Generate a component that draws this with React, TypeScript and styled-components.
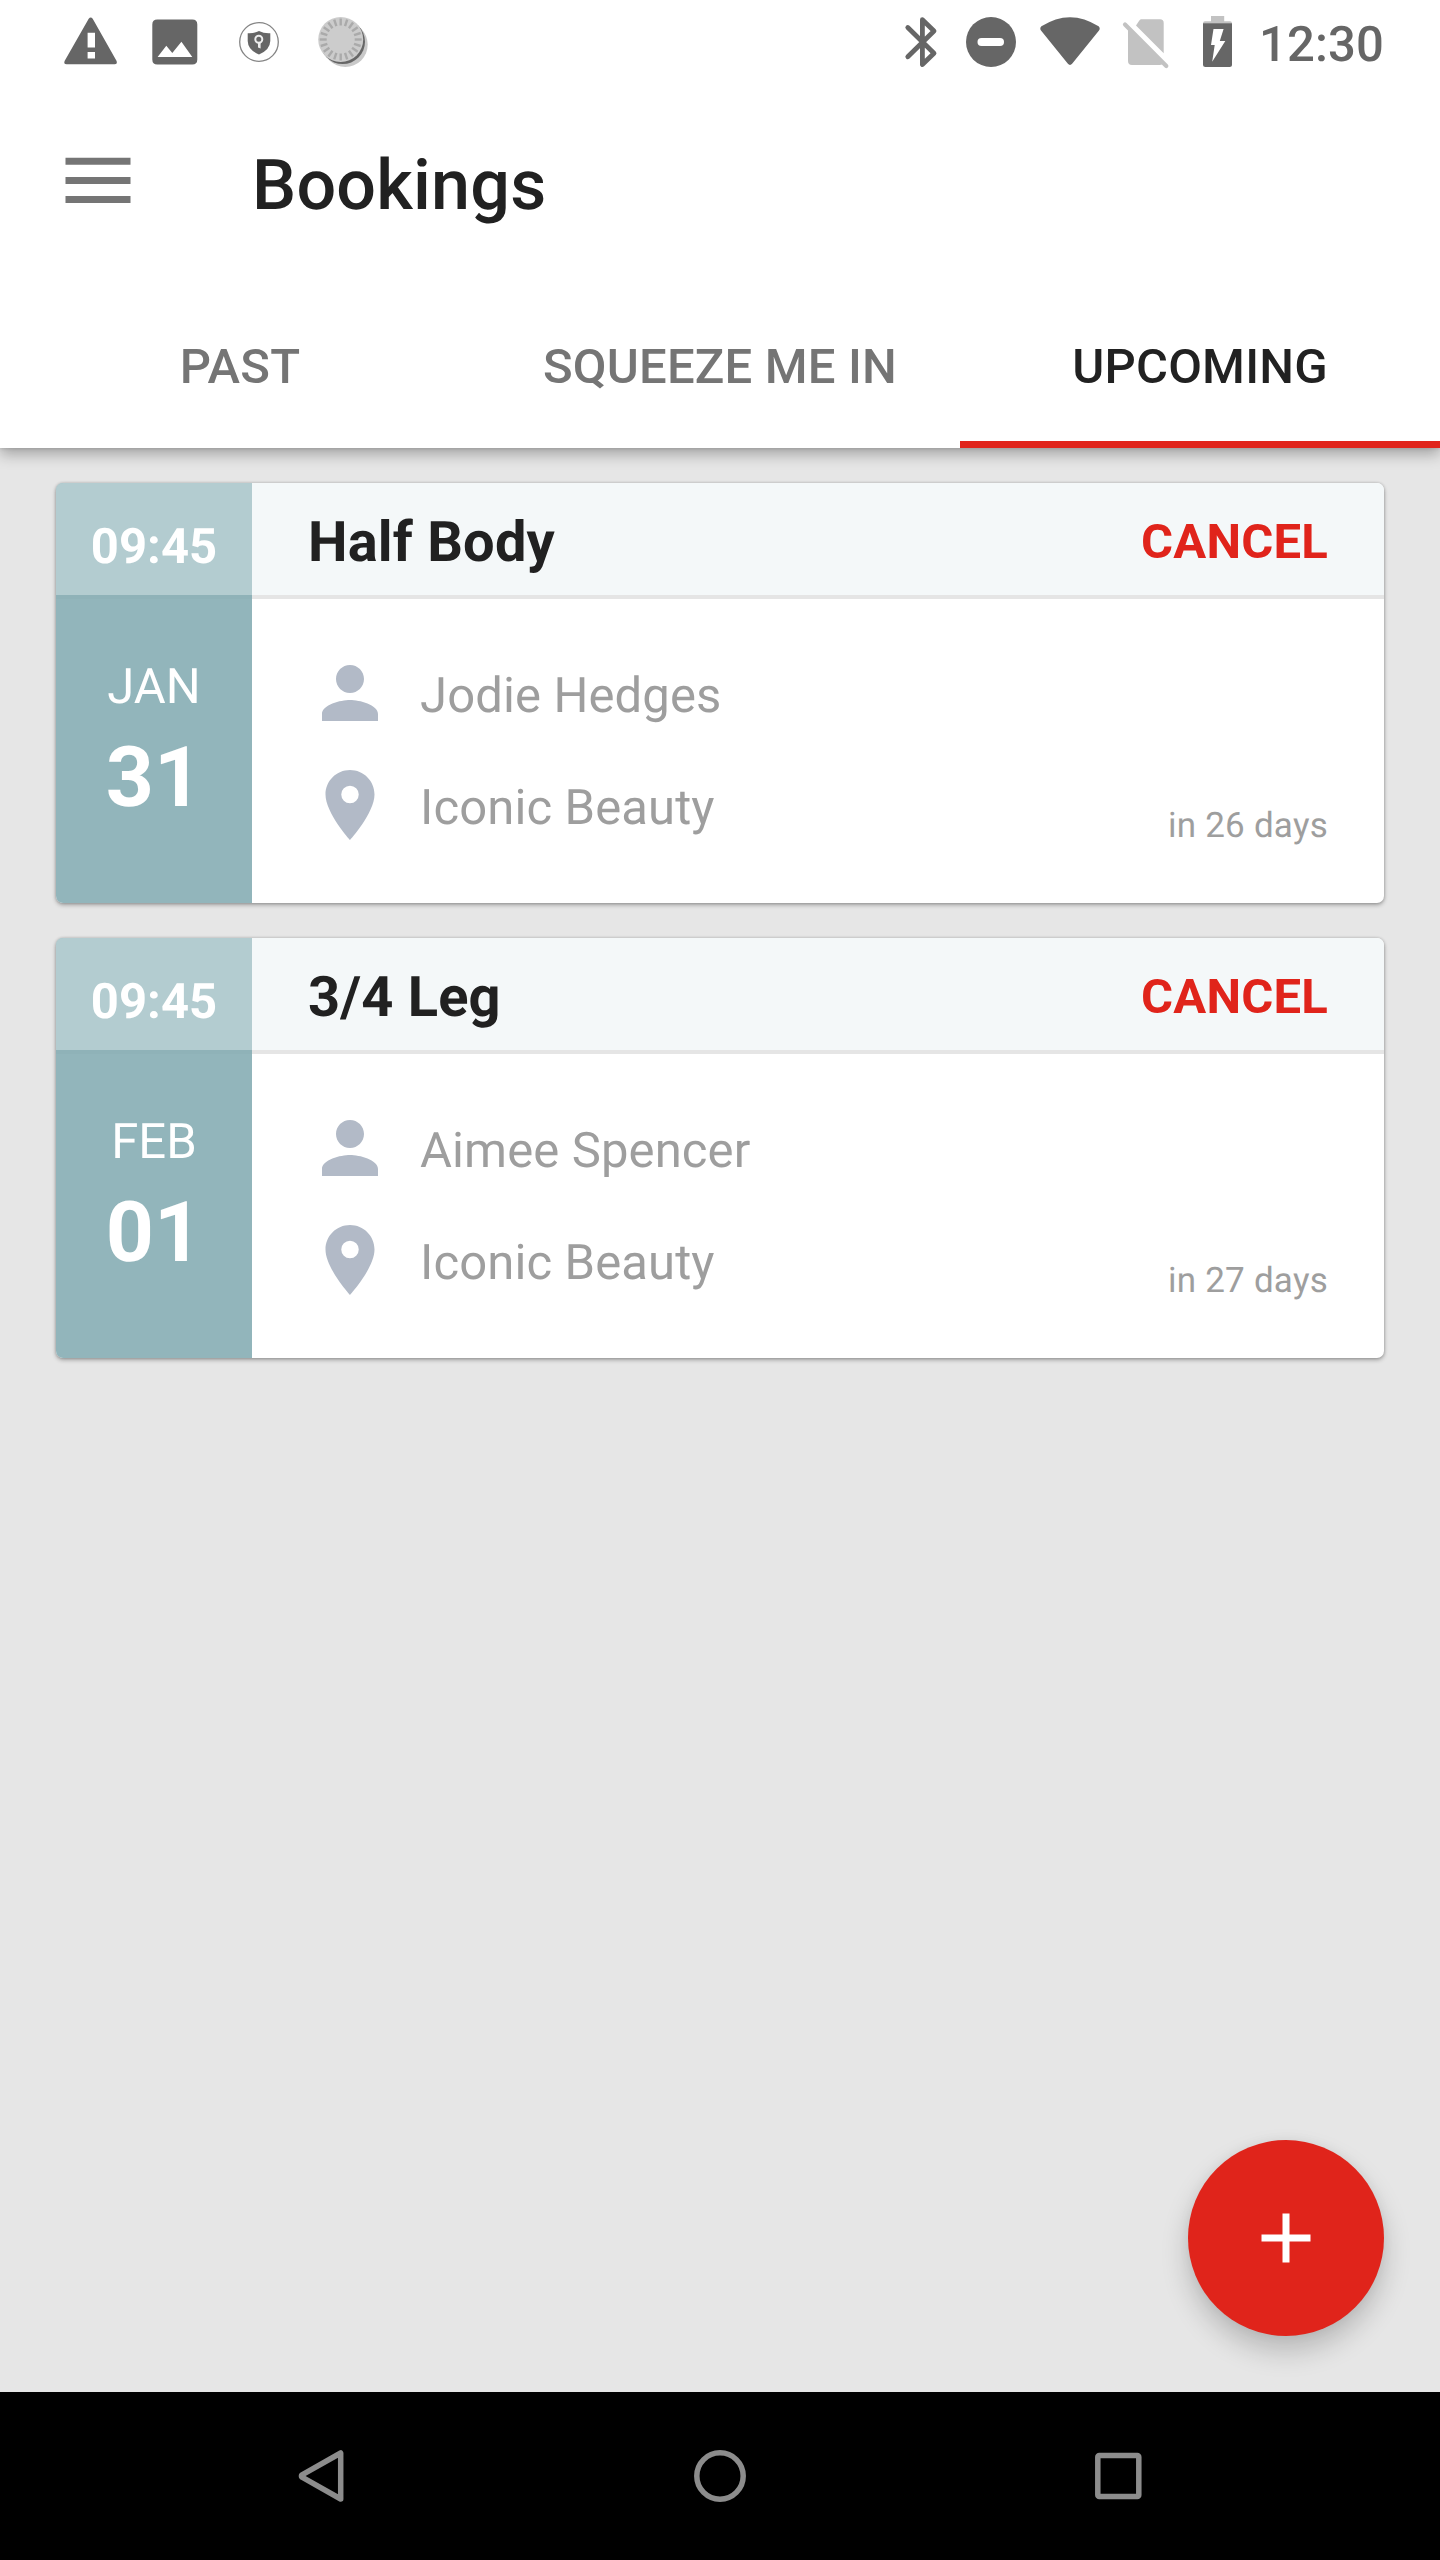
import React from 'react';
import styled, { createGlobalStyle } from 'styled-components';

const GlobalStyle = createGlobalStyle`
  *, *::before, *::after { box-sizing: border-box; }
  body { margin: 0; background: #e6e6e6; }
  button { border: 0; padding: 0; background: none; font: inherit; color: inherit; }
`;

const Screen = styled.div`
  width: 1440px;
  height: 2560px;
  display: flex;
  flex-direction: column;
  background: #e6e6e6;
  font-family: Roboto, 'Noto Sans', sans-serif;
  text-rendering: geometricPrecision;
  color: #212121;
  overflow: hidden;
  svg { display: block; flex: none; overflow: visible; }
`;

const AppBar = styled.header`
  flex: none;
  height: 448px;
  background: #fff;
  box-shadow: 0 6px 14px rgba(0, 0, 0, 0.3), 0 0 4px rgba(0, 0, 0, 0.16);
`;

const StatusBar = styled.div`
  height: 84px;
  padding: 0 56px 0 60px;
  display: flex;
  justify-content: space-between;
  color: #666;
`;

const StatusGroup = styled.div<{ $gap: number }>`
  display: flex;
  align-items: center;
  gap: ${(p) => p.$gap}px;
`;

const Clock = styled.span`
  width: 129px;
  padding-top: 5px;
  text-align: right;
  white-space: nowrap;
  font-size: 49px;
  font-weight: 500;
  line-height: 60px;
  letter-spacing: 0.15px;
`;

const Toolbar = styled.div`
  height: 196px;
  padding-left: 56px;
  display: flex;
  align-items: center;
`;

const IconButton = styled.button`
  width: 84px;
  height: 84px;
`;

const PageTitle = styled.h1`
  margin: 8px 0 0 112px;
  font-size: 70px;
  font-weight: 500;
  line-height: 84px;
  letter-spacing: 0.22px;
`;

const Tabs = styled.nav`
  height: 168px;
  display: grid;
  grid-template-columns: repeat(3, 1fr);
`;

const Tab = styled.button<{ $active?: boolean }>`
  display: flex;
  align-items: center;
  justify-content: center;
  padding-top: ${(p) => (p.$active ? 12 : 5)}px;
  border-bottom: ${(p) => (p.$active ? '7px solid #e0241b' : '0')};
  color: ${(p) => (p.$active ? '#212121' : '#757575')};
  font-size: 49px;
  font-weight: 500;
  letter-spacing: 0.18px;
`;

const List = styled.main`
  flex: 1;
  display: flex;
  flex-direction: column;
  gap: 35px;
  padding: 35px 56px 56px;
`;

const Card = styled.article`
  height: 420px;
  display: grid;
  grid-template-columns: 196px 1fr;
  border-radius: 7px;
  overflow: hidden;
  background: #fff;
  box-shadow: 0 2px 4px rgba(0, 0, 0, 0.3), 0 0 3px rgba(0, 0, 0, 0.2);
`;

const DateColumn = styled.div`
  display: flex;
  flex-direction: column;
  align-items: center;
  background: #92b5bb;
  color: #fff;
`;

const Time = styled.div`
  align-self: stretch;
  height: 116px;
  padding-top: 15px;
  background: #b3ccd0;
  border-bottom: 4px solid #8fb2b8;
  text-align: center;
  font-size: 49px;
  font-weight: 700;
  line-height: 98px;
`;

const Month = styled.div`
  margin-top: 58px;
  font-size: 49px;
  line-height: 60px;
`;

const Day = styled.div`
  margin-top: 11px;
  font-size: 84px;
  font-weight: 700;
  line-height: 100px;
`;

const Details = styled.div`
  display: flex;
  flex-direction: column;
`;

const CardHeader = styled.div`
  height: 116px;
  padding: 0 56px;
  display: flex;
  align-items: center;
  justify-content: space-between;
  background: #f4f8f9;
  border-bottom: 4px solid #e5e5e5;
`;

const Treatment = styled.h2`
  margin: 6px 0 0;
  font-size: 56px;
  font-weight: 700;
  line-height: 66px;
  letter-spacing: 0.18px;
`;

const CancelButton = styled.button`
  padding-top: 6px;
  color: #e0241b;
  font-size: 49px;
  font-weight: 700;
  line-height: 60px;
  letter-spacing: 0.22px;
`;

const CardBody = styled.div`
  flex: 1;
  padding: 52px 56px 0;
  display: flex;
  justify-content: space-between;
`;

const Facts = styled.div`
  display: flex;
  flex-direction: column;
  gap: 28px;
`;

const Fact = styled.div`
  height: 84px;
  display: flex;
  align-items: center;
  gap: 28px;
  color: #9e9e9e;
  font-size: 49px;
  line-height: 60px;
  letter-spacing: 0.12px;
  svg { color: #b2bac7; }
  span { padding-top: 6px; }
`;

const Countdown = styled.div`
  margin-top: 154px;
  color: #9e9e9e;
  font-size: 35px;
  line-height: 42px;
  letter-spacing: 0.24px;
`;

const Fab = styled.button`
  margin-top: auto;
  align-self: flex-end;
  width: 196px;
  height: 196px;
  display: grid;
  place-items: center;
  border-radius: 50%;
  background: #e0241b;
  color: #fff;
  box-shadow: 0 15px 28px rgba(0, 0, 0, 0.2), 0 0 12px rgba(0, 0, 0, 0.05);
`;

const NavBar = styled.footer`
  flex: none;
  height: 168px;
  padding: 0 280px;
  display: flex;
  align-items: center;
  justify-content: space-between;
  background: #000;
  color: #8c8c8c;
`;

const RAYS = Array.from({ length: 20 }, (_, i) => i * 18);

const StatusIcon = ({ x, w = 60, children }: { x: number; w?: number; children: React.ReactNode }) => (
  <svg width={w} height={60} viewBox={`${x} 12 ${w} 60`} fill="currentColor">
    {children}
  </svg>
);

const Glyph = ({ d }: { d: string }) => (
  <svg width={84} height={84} viewBox="0 0 24 24" fill="currentColor">
    <path d={d} />
  </svg>
);

const PERSON =
  'M12 12c2.21 0 4-1.79 4-4s-1.79-4-4-4-4 1.79-4 4 1.79 4 4 4zm0 2c-2.67 0-8 1.34-8 4v2h16v-2c0-2.66-5.33-4-8-4z';
const PLACE =
  'M12 2C8.13 2 5 5.13 5 9c0 5.25 7 13 7 13s7-7.75 7-13c0-3.87-3.13-7-7-7zm0 9.5a2.5 2.5 0 0 1 0-5 2.5 2.5 0 0 1 0 5z';
const PLUS = 'M19 13h-6v6h-2v-6H5v-2h6V5h2v6h6v2z';

const bookings = [
  { time: '09:45', month: 'JAN', day: '31', treatment: 'Half Body', person: 'Jodie Hedges', place: 'Iconic Beauty', due: 'in 26 days' },
  { time: '09:45', month: 'FEB', day: '01', treatment: '3/4 Leg', person: 'Aimee Spencer', place: 'Iconic Beauty', due: 'in 27 days' },
];

const StatusIcons = () => (
  <StatusBar>
    <StatusGroup $gap={25}>
      <StatusIcon x={60}>
        <path fillRule="evenodd" d="M88.7 18.8Q90.7 16.4 92.7 18.8L116.6 61Q117.6 64.3 114.6 64.3H66.6Q63.4 64.3 64.6 61ZM87.6 32.8V47.4H95V32.8ZM87.6 52V58.6H95V52Z" />
      </StatusIcon>
      <StatusIcon x={145}>
        <path fillRule="evenodd" d="M157.3 19.5H192.3Q197.3 19.5 197.3 24.5V59.5Q197.3 64.5 192.3 64.5H157.3Q152.3 64.5 152.3 59.5V24.5Q152.3 19.5 157.3 19.5ZM157.6 57H192.3L181.4 41.8L172.3 53L166.3 45.7Z" />
      </StatusIcon>
      <StatusIcon x={230}>
        <circle cx="259" cy="42" r="19.3" fill="none" stroke="#858585" strokeWidth="1.3" />
        <path d="M259 31 Q264 33.6 270.3 33.2 V41 Q270 50 259 54.4 Q248 50 247.7 41 V33.2 Q254 33.6 259 31Z" />
        <circle cx="258.8" cy="39.3" r="3.5" fill="none" stroke="#eee" strokeWidth="2" />
        <path d="M258 42h2.6v6.6l-2.6-1Z" fill="#eee" />
      </StatusIcon>
      <StatusIcon x={315}>
        <circle cx="345.3" cy="44.6" r="22.4" fill="#c9c9c9" />
        <circle cx="342.6" cy="41.7" r="22.4" fill="#666" />
        <circle cx="340.7" cy="39.5" r="22.5" fill="#ccc" />
        <g stroke="#aaa" strokeWidth="2.4">
          {RAYS.map((a) => (
            <line key={a} x1="340.7" y1="18.5" x2="340.7" y2="25.5" transform={`rotate(${a} 340.7 39.5)`} />
          ))}
        </g>
      </StatusIcon>
    </StatusGroup>
    <StatusGroup $gap={9}>
      <StatusIcon x={892}>
        <path d="M907.8 27.5L934 53.2L922.4 64.5V19.7L934 31L907.8 56.7" fill="none" stroke="currentColor" strokeWidth="4.8" strokeLinecap="round" strokeLinejoin="round" />
      </StatusIcon>
      <StatusIcon x={961}>
        <circle cx="991" cy="42" r="25" />
        <rect x="977.5" y="38" width="26.5" height="8" rx="4" fill="#fff" />
      </StatusIcon>
      <StatusIcon x={1030} w={78}>
        <path d="M1041.4 26.3Q1070 8 1098.6 26.3Q1100.6 28.2 1099 30.6L1072.3 63.5Q1070 66.4 1067.7 63.5L1041 30.6Q1039.4 28.2 1041.4 26.3Z" />
      </StatusIcon>
      <StatusIcon x={1117}>
        <path d="M1141 19.3H1160Q1163.7 19.3 1163.7 23V53.3L1136 25.6L1139 21Q1140 19.3 1141 19.3ZM1128 29.3L1163 63.6Q1162 65 1160 65H1132Q1128 65 1128 61Z" fill="#c2c2c2" />
        <path d="M1125 24.5L1166.3 66" stroke="#c2c2c2" strokeWidth="4.2" strokeLinecap="round" />
      </StatusIcon>
      <StatusIcon x={1186}>
        <path d="M1211 16H1224.2V21.2H1230Q1232 21.2 1232 23.4H1203Q1203 21.2 1205 21.2H1211Z" fill="#c2c2c2" />
        <path d="M1203 23.2H1232V64.5Q1232 67 1229.5 67H1205.5Q1203 67 1203 64.5Z" />
        <path d="M1213.5 29H1223.6L1219.8 41H1225.3L1212.2 61.7L1214.7 45H1211Z" fill="#fff" />
      </StatusIcon>
      <Clock>12:30</Clock>
    </StatusGroup>
  </StatusBar>
);

export default function App() {
  return (
    <Screen>
      <GlobalStyle />
      <AppBar>
        <StatusIcons />
        <Toolbar>
          <IconButton aria-label="Menu">
            <svg width={84} height={84} viewBox="0 0 84 84" fill="#757575">
              <path d="M9.5 17.7h65v7h-65zM9.5 37h65v7h-65zM9.5 56h65v7h-65z" />
            </svg>
          </IconButton>
          <PageTitle>Bookings</PageTitle>
        </Toolbar>
        <Tabs>
          <Tab>PAST</Tab>
          <Tab>SQUEEZE ME IN</Tab>
          <Tab $active>UPCOMING</Tab>
        </Tabs>
      </AppBar>
      <List>
        {bookings.map((b) => (
          <Card key={b.treatment}>
            <DateColumn>
              <Time>{b.time}</Time>
              <Month>{b.month}</Month>
              <Day>{b.day}</Day>
            </DateColumn>
            <Details>
              <CardHeader>
                <Treatment>{b.treatment}</Treatment>
                <CancelButton>CANCEL</CancelButton>
              </CardHeader>
              <CardBody>
                <Facts>
                  <Fact><Glyph d={PERSON} /><span>{b.person}</span></Fact>
                  <Fact><Glyph d={PLACE} /><span>{b.place}</span></Fact>
                </Facts>
                <Countdown>{b.due}</Countdown>
              </CardBody>
            </Details>
          </Card>
        ))}
        <Fab aria-label="New booking"><Glyph d={PLUS} /></Fab>
      </List>
      <NavBar>
        <svg width={84} height={84} viewBox="280 2434 84 84" fill="none" stroke="currentColor" strokeWidth="5.5" strokeLinejoin="round">
          <path d="M340.7 2453V2499L302 2477.2Q300.8 2476 302 2474.8Z" />
        </svg>
        <svg width={84} height={84} viewBox="678 2434 84 84" fill="none" stroke="currentColor" strokeWidth="5.5">
          <circle cx="720" cy="2476" r="23.2" />
        </svg>
        <svg width={84} height={84} viewBox="1076 2434 84 84" fill="none" stroke="currentColor" strokeWidth="5.5">
          <rect x="1097.8" y="2455.6" width="41" height="41" rx="1.5" />
        </svg>
      </NavBar>
    </Screen>
  );
}
